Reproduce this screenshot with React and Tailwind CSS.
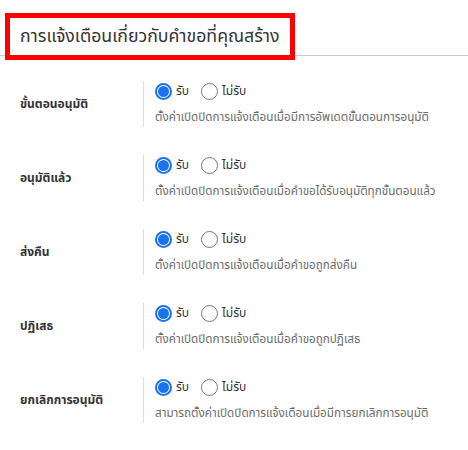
const rows = [
  { label: "ขั้นตอนอนุมัติ", desc: "ตั้งค่าเปิดปิดการแจ้งเตือนเมื่อมีการอัพเดตขั้นตอนการอนุมัติ" },
  { label: "อนุมัติแล้ว", desc: "ตั้งค่าเปิดปิดการแจ้งเตือนเมื่อคำขอได้รับอนุมัติทุกขั้นตอนแล้ว" },
  { label: "ส่งคืน", desc: "ตั้งค่าเปิดปิดการแจ้งเตือนเมื่อคำขอถูกส่งคืน" },
  { label: "ปฏิเสธ", desc: "ตั้งค่าเปิดปิดการแจ้งเตือนเมื่อคำขอถูกปฏิเสธ" },
  { label: "ยกเลิกการอนุมัติ", desc: "สามารถตั้งค่าเปิดปิดการแจ้งเตือนเมื่อมีการยกเลิกการอนุมัติ" },
];

function Radio({ checked, label }) {
  return (
    <label className="flex items-center gap-[4px] cursor-pointer">
      {checked ? (
        <span className="w-[17px] h-[17px] rounded-full bg-[#1a73e8] flex items-center justify-center">
          <span className="w-[13px] h-[13px] rounded-full bg-white flex items-center justify-center">
            <span className="w-[11px] h-[11px] rounded-full bg-[#1a73e8]" />
          </span>
        </span>
      ) : (
        <span className="w-[17px] h-[17px] rounded-full border border-[#767676] bg-white" />
      )}
      <span className="text-[12px] text-[#333]">{label}</span>
    </label>
  );
}

export default function App() {
  return (
    <div className="w-[468px] h-[450px] bg-white font-['Noto_Sans_Thai','Tahoma','Noto_Sans',sans-serif] text-[#333]">
      <div className="relative h-[56px] border-b border-[#cccccc]">
        <div className="absolute left-[5px] top-[13px] w-[290px] h-[47px] border-[5px] border-[#ff0000] bg-white flex items-center pl-[10px]">
          <h2 className="text-[17.7px] leading-none whitespace-nowrap text-[#333]">การแจ้งเตือนเกี่ยวกับคำขอที่คุณสร้าง</h2>
        </div>
      </div>

      <div className="flex flex-col gap-[28px] pt-[25px] pl-[20px]">
        {rows.map((r) => (
          <div key={r.label} className="flex items-center">
            <div className="w-[123px] text-[12px] font-bold">{r.label}</div>
            <div className="border-l border-[#dddddd] pl-[11px] h-[46px] flex flex-col">
              <div className="h-[20px] flex items-center gap-[12px]">
                <Radio checked label="รับ" />
                <Radio label="ไม่รับ" />
              </div>
              <div className="mt-[8px] h-[18px] leading-[18px] text-[11.7px] text-[#6b6b6b] whitespace-nowrap">{r.desc}</div>
            </div>
          </div>
        ))}
      </div>
    </div>
  );
}
